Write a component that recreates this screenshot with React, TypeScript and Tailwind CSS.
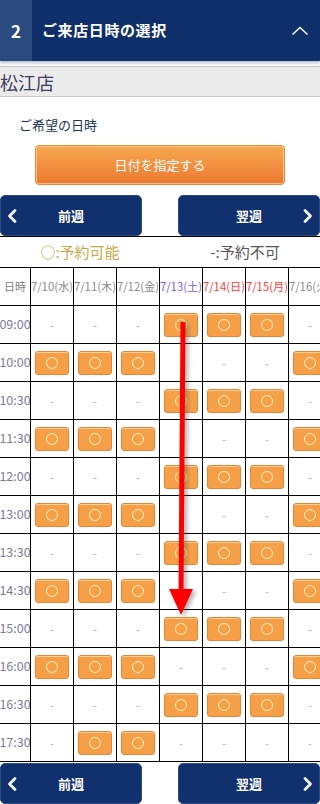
import * as React from 'react';

type Slot = 0 | 1;

const days = [
  { label: '7/10(水)', color: 'text-[#8a8a8a]' },
  { label: '7/11(木)', color: 'text-[#8a8a8a]' },
  { label: '7/12(金)', color: 'text-[#8a8a8a]' },
  { label: '7/13(土)', color: 'text-[#7b5cf0]' },
  { label: '7/14(日)', color: 'text-[#ff3b3b]' },
  { label: '7/15(月)', color: 'text-[#ff3b3b]' },
  { label: '7/16(火)', color: 'text-[#8a8a8a]' },
];

const A: Slot[] = [0, 0, 0, 1, 1, 1, 0];
const B: Slot[] = [1, 1, 1, 0, 0, 0, 1];

const rows: { time: string; slots: Slot[] }[] = [
  { time: '09:00', slots: A },
  { time: '10:00', slots: B },
  { time: '10:30', slots: A },
  { time: '11:30', slots: B },
  { time: '12:00', slots: A },
  { time: '13:00', slots: B },
  { time: '13:30', slots: A },
  { time: '14:30', slots: B },
  { time: '15:00', slots: A },
  { time: '16:00', slots: B },
  { time: '16:30', slots: A },
  { time: '17:30', slots: [0, 1, 1, 0, 0, 0, 0] },
];

const font = { fontFamily: '"Noto Sans CJK JP", "Noto Sans", sans-serif' };

function ChevronLeft() {
  return (
    <svg width="10" height="14" viewBox="0 0 10 14" fill="none">
      <polyline points="8,1.5 2.5,7 8,12.5" stroke="white" strokeWidth="2.6" strokeLinecap="round" strokeLinejoin="round" />
    </svg>
  );
}

function ChevronRight() {
  return (
    <svg width="10" height="14" viewBox="0 0 10 14" fill="none">
      <polyline points="2,1.5 7.5,7 2,12.5" stroke="white" strokeWidth="2.6" strokeLinecap="round" strokeLinejoin="round" />
    </svg>
  );
}

function WeekNav() {
  return (
    <div className="flex justify-between">
      <button className="w-[142px] h-[41px] rounded-[5px] bg-[#11306e] border border-[#2c4b80] flex items-center relative text-white">
        <span className="absolute left-[6px] top-1/2 -translate-y-1/2"><ChevronLeft /></span>
        <span className="flex-1 text-center text-[13px] font-bold">前週</span>
      </button>
      <button className="w-[142px] h-[41px] rounded-[5px] bg-[#11306e] border border-[#2c4b80] flex items-center relative text-white">
        <span className="flex-1 text-center text-[13px] font-bold">翌週</span>
        <span className="absolute right-[6px] top-1/2 -translate-y-1/2"><ChevronRight /></span>
      </button>
    </div>
  );
}

function SlotButton() {
  return (
    <div className="w-[34px] h-[24px] rounded-[3px] bg-[#f5a047] border border-[#e8843a] shadow-[inset_0_1px_0_rgba(255,220,170,0.8)] flex items-center justify-center">
      <div className="w-[12px] h-[12px] rounded-full border-[1.5px] border-[#fff3c4]" />
    </div>
  );
}

export default function App() {
  return (
    <div className="w-[320px] h-[804px] overflow-hidden relative bg-white" style={font}>
      {/* step header */}
      <div className="h-[61px] flex bg-[#0f2f6b] shadow-[0_2px_3px_rgba(40,60,110,0.35)] relative z-10">
        <div className="w-[32px] bg-[#2b4a7d] flex items-center justify-center text-white text-[17px] font-bold">2</div>
        <div className="flex-1 flex items-center pl-[10px] text-white text-[15px] font-bold tracking-[0.6px]">ご来店日時の選択</div>
        <div className="w-[40px] flex items-center justify-center">
          <svg width="18" height="10" viewBox="0 0 18 10" fill="none">
            <polyline points="1.5,8.5 9,1.5 16.5,8.5" stroke="white" strokeWidth="1.4" />
          </svg>
        </div>
      </div>

      <div className="mt-[5px] h-[31px] bg-[#ebebeb] border-y border-[#c8c8c8] flex items-center text-[18px] text-[#3b3d5c] leading-none">松江店</div>

      <div className="pt-[18px] pl-[19px] text-[13px] text-[#223356] leading-[20px]">ご希望の日時</div>

      <div className="mt-[10px] flex justify-center">
        <button className="w-[250px] h-[40px] rounded-[4px] bg-gradient-to-b from-[#f7a84e] to-[#ec7831] border border-[#ea8838] shadow-[inset_0_0_0_1px_rgba(255,214,160,0.75)] text-white text-[13px]">
          日付を指定する
        </button>
      </div>

      <div className="mt-[10px]">
        <WeekNav />
      </div>

      {/* schedule table */}
      <div className="w-[331px] border-t border-black">
        <div className="h-[31px] flex items-center border-b border-black text-[15px]">
          <div className="w-[160px] text-center text-[#c9a84a]">○:予約可能</div>
          <div className="w-[170px] text-center text-[#555]">-:予約不可</div>
        </div>

        <div className="h-[38px] flex border-b border-black">
          <div className="w-[30px] flex items-center justify-center text-[11px] text-[#808080]">日時</div>
          {days.map((d) => (
            <div key={d.label} className={`w-[43px] border-l border-black flex items-center justify-center whitespace-nowrap text-[11.3px] ${d.color}`}>
              {d.label}
            </div>
          ))}
        </div>

        {rows.map((r) => (
          <div key={r.time} className="h-[38px] flex border-b border-black">
            <div className="w-[30px] flex items-center justify-center whitespace-nowrap text-[12.5px] text-[#7c7c9a]">{r.time}</div>
            {r.slots.map((s, i) => (
              <div key={i} className="w-[43px] border-l border-black flex items-center justify-center">
                {s ? <SlotButton /> : <span className="text-[10px] text-[#9a9a9a]">-</span>}
              </div>
            ))}
          </div>
        ))}
      </div>

      <div className="mt-[1px]">
        <WeekNav />
      </div>

      {/* annotation arrow */}
      <svg className="absolute top-0 left-0 pointer-events-none" width="320" height="804" viewBox="0 0 320 804">
        <defs>
          <filter id="blur" x="-50%" y="-10%" width="200%" height="120%">
            <feGaussianBlur stdDeviation="2" />
          </filter>
        </defs>
        <g filter="url(#blur)" opacity="0.45" transform="translate(3,2)">
          <line x1="183" y1="322" x2="181" y2="594" stroke="#555" strokeWidth="5" />
          <polygon points="169,589 193,589 181,615" fill="#555" />
        </g>
        <line x1="183" y1="322" x2="181" y2="594" stroke="#ff0000" strokeWidth="5" />
        <polygon points="169,589 193,589 181,615" fill="#ff0000" />
      </svg>
    </div>
  );
}
